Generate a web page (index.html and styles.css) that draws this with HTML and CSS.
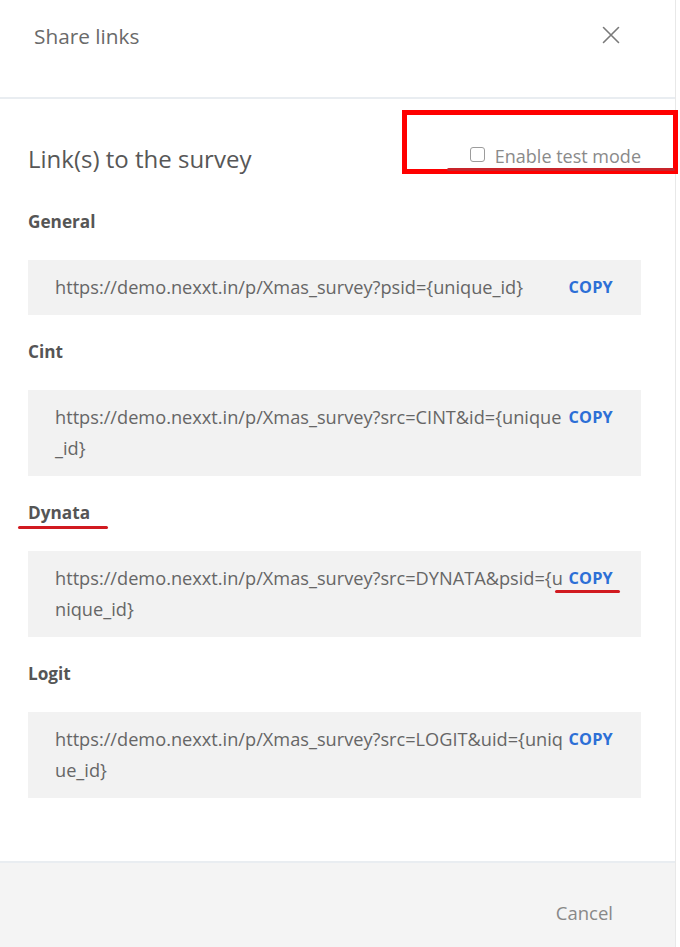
FILE: index.html
```html
<!DOCTYPE html>
<html>
<head>
<meta charset="utf-8">
<title>Share links</title>
<link rel="stylesheet" href="styles.css">
</head>
<body>
<div class="page">
  <div class="dialog">
    <header class="header">
      <h1 class="header-title">Share links</h1>
      <button class="close" aria-label="Close">
        <svg width="18" height="18" viewBox="0 0 18 18"><path d="M1.5 1.5 L16.5 16.5 M16.5 1.5 L1.5 16.5" stroke="#7a7a7a" stroke-width="1.6" fill="none" stroke-linecap="round"/></svg>
      </button>
    </header>
    <main class="body">
      <div class="title-row">
        <h2 class="title">Link(s) to the survey</h2>
        <label class="test-mode"><input type="checkbox" class="check"><span>Enable test mode</span></label>
      </div>

      <section class="link-group">
        <h3 class="label">General</h3>
        <div class="link-box">
          <span class="url">https://demo.nexxt.in/p/Xmas_survey?psid={unique_id}</span>
          <span class="copy">COPY</span>
        </div>
      </section>

      <section class="link-group">
        <h3 class="label">Cint</h3>
        <div class="link-box">
          <span class="url">https://demo.nexxt.in/p/Xmas_survey?src=CINT&amp;id={unique<br>_id}</span>
          <span class="copy">COPY</span>
        </div>
      </section>

      <section class="link-group">
        <h3 class="label"><span class="marked">Dynata</span></h3>
        <div class="link-box">
          <span class="url">https://demo.nexxt.in/p/Xmas_survey?src=DYNATA&amp;psid={u<br>nique_id}</span>
          <span class="copy marked-copy">COPY</span>
        </div>
      </section>

      <section class="link-group">
        <h3 class="label">Logit</h3>
        <div class="link-box">
          <span class="url">https://demo.nexxt.in/p/Xmas_survey?src=LOGIT&amp;uid={uniq<br>ue_id}</span>
          <span class="copy">COPY</span>
        </div>
      </section>
    </main>
    <footer class="footer">
      <button class="cancel">Cancel</button>
    </footer>
  </div>
  <div class="annot-box"></div>
  <div class="annot-line"></div>
</div>
</body>
</html>
```
FILE: styles.css
```css
* { box-sizing: border-box; }
html, body { margin: 0; padding: 0; background: #fff; }
body { font-family: "Open Sans", "Noto Sans", sans-serif; color: #666; }
.page { position: relative; width: 680px; height: 947px; overflow: hidden; }
.dialog {
  width: 676px; height: 947px;
  display: flex; flex-direction: column;
  border-right: 1px solid #e8e8e8;
}
.header {
  height: 99px; flex: none;
  display: flex; justify-content: space-between; align-items: flex-start;
  padding: 21px 55px 0 34px;
  border-bottom: 2px solid #e9edf1;
}
.header-title { margin: 0; font-size: 20.8px; font-weight: 400; line-height: 30px; color: #6a6a6a; }
.close { border: 0; background: none; padding: 0; margin-top: 5px; width: 18px; height: 18px; cursor: pointer; display: flex; }
.body { flex: 1; padding: 45px 34px 0 28px; }
.title-row { display: flex; justify-content: space-between; align-items: center; height: 30px; }
.title { margin: 0; font-size: 24px; font-weight: 420; line-height: 30px; color: #575757; }
.test-mode { display: flex; align-items: center; gap: 10px; font-size: 18px; color: #8a8a8a; margin-bottom: 6px; margin-right: 0; }
.check {
  appearance: none; -webkit-appearance: none; margin: 0;
  width: 15px; height: 15px; border: 1.5px solid #9c9c9c; border-radius: 3px; background: #fff;
  margin-top: -3px;
}
.link-group { margin-top: 36px; }
.link-group + .link-group { margin-top: 25px; }
.label { margin: 0 0 26px; font-size: 17.2px; font-weight: 700; line-height: 24px; color: #555; }
.marked { position: relative; }
.marked::after {
  content: ""; position: absolute; left: -10px; right: -18px; bottom: -5px; height: 3px;
  background: #d11a20; border-radius: 2px;
}
.link-box {
  display: flex; align-items: flex-start; gap: 6px;
  background: #f2f2f2;
  padding: 12px 28px 12px 27px;
  width: 613px;
}
.url { flex: 1; min-width: 0; font-size: 18.2px; line-height: 31px; color: #666; word-break: break-all; white-space: nowrap; }
.copy { flex: none; font-size: 16.3px; font-weight: 700; line-height: 31px; color: #2d6fd6; letter-spacing: 0.2px; cursor: pointer; }
.marked-copy { position: relative; }
.marked-copy::after {
  content: ""; position: absolute; left: -13px; right: -7px; bottom: 1px; height: 3px;
  background: #d11a20; border-radius: 2px;
}
.footer {
  height: 86px; flex: none;
  border-top: 2px solid #e9edf1;
  background: #f4f4f4;
  display: flex; justify-content: flex-end; align-items: center;
  padding: 14px 62px 0 0;
}
.cancel { border: 0; background: none; padding: 0; font-family: inherit; font-size: 18.5px; color: #888; cursor: pointer; }
.annot-box {
  position: absolute; left: 402px; top: 110px; width: 276px; height: 64px;
  border: 5px solid #ff0000;
}
.annot-line {
  position: absolute; left: 447px; top: 168px; width: 228px; height: 3px;
  background: #c8242a; border-radius: 2px;
}
```
